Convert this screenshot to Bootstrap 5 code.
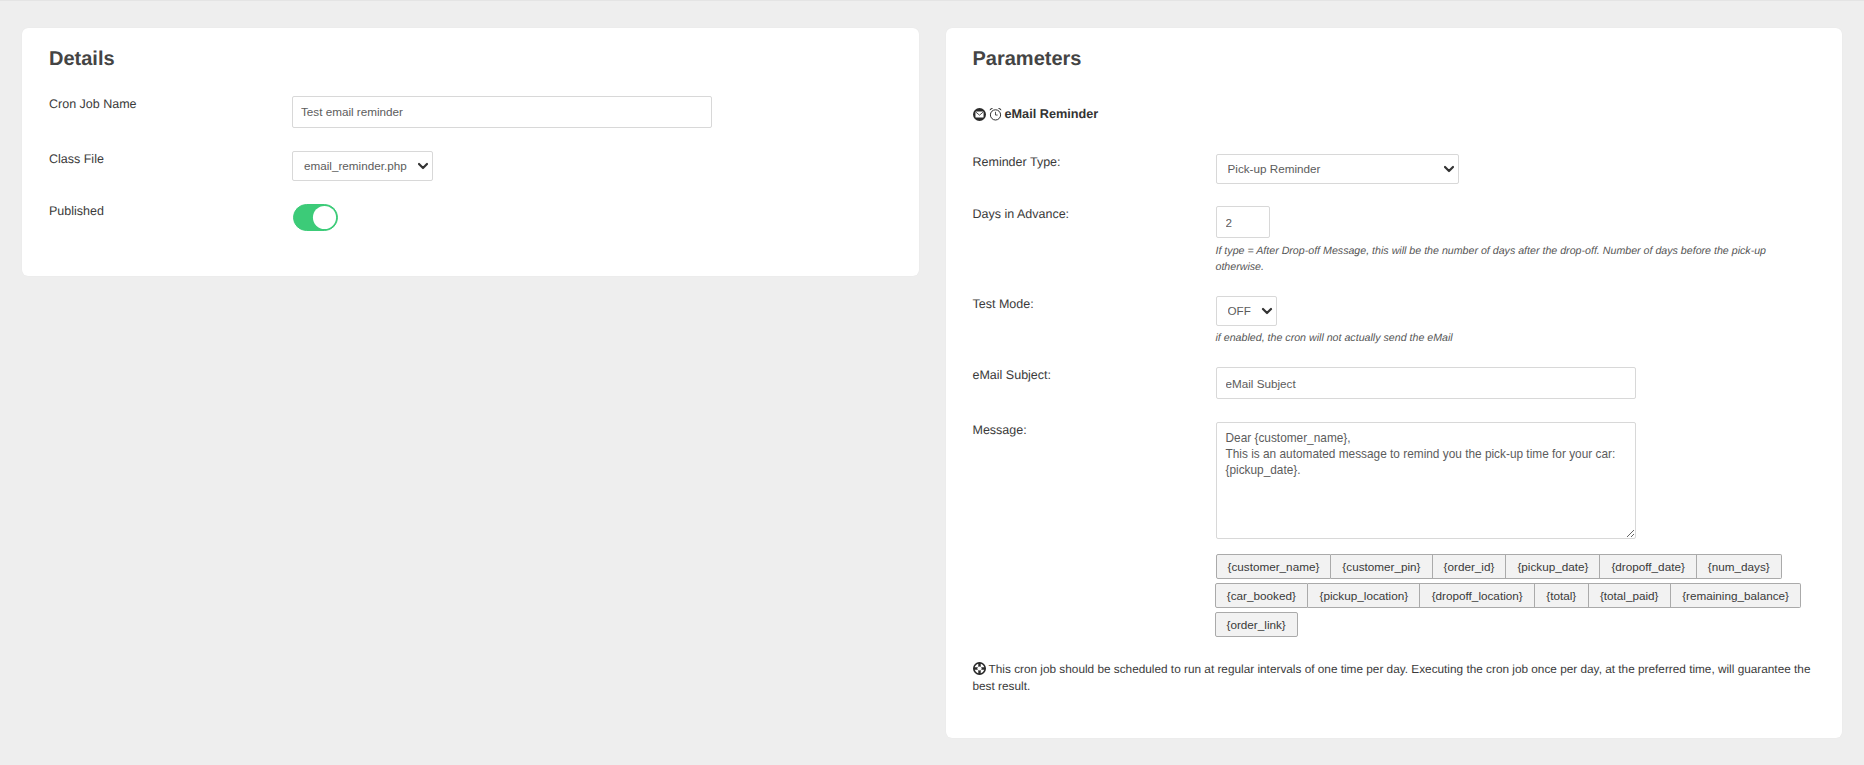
<!DOCTYPE html>
<html lang="en">
<head>
<meta charset="utf-8">
<title>Cron Job</title>
<link rel="stylesheet" href="https://cdn.jsdelivr.net/npm/bootstrap@5.3.0/dist/css/bootstrap.min.css">
<style>
html,body{height:100%}
body{background:#eee;font-family:"Liberation Sans",Arial,sans-serif;font-size:12.5px;line-height:16px;color:#3a3a3a;border-top:1px solid #e4e4e4;text-rendering:geometricPrecision}
.page-wrap{padding:27px 22px 27px}
.panel-row{--bs-gutter-x:27px}
.panel{background:#fff;border-radius:6px;box-shadow:0 0 1px rgba(0,0,0,.08);padding:19px 27px}
.panel-a{height:248px}
.panel-b{height:710px}
.panel-title{font-size:20px;font-weight:700;line-height:24px;color:#444;margin:0}
.field-row{display:flex}
.field-label{width:243px;flex:none;margin:0}
.label-up{margin-top:-1px}
.field-input.form-control,.field-select.form-select,.field-area.form-control{display:block;border:1px solid #d8d8d8;border-radius:2px;background-color:#fff;color:#5c5c5c;font-size:11.7px;line-height:16px;box-shadow:none;min-height:0}
.field-input.form-control{height:32px;padding:6px 8px 8px}
.field-input.input-low.form-control{padding:7px 9px}
.field-select.form-select{height:30px;padding:0 20px 0 11px;background-position:right 3px center;background-size:12px 10px;background-image:url("data:image/svg+xml,%3csvg xmlns='http://www.w3.org/2000/svg' viewBox='0 0 12 10'%3e%3cpath fill='none' stroke='%23333' stroke-width='2.2' stroke-linecap='round' stroke-linejoin='round' d='M2 3l4 4 4-4'/%3e%3c/svg%3e")}
.w-name.form-control{width:420px}
.w-class.form-select{width:141px}
.w-type.form-select{width:243px}
.w-days.form-control{width:54px}
.w-off.form-select{width:61px}
.w-subject.form-control{width:420px}
.field-area.form-control{width:420px;height:117px;padding:7px 9px;resize:vertical;font-size:11.85px}
.form-switch .green-switch.form-check-input{width:45px;height:27px;margin:0;border:1px solid #3ccb78;background-color:#3ccb78;box-shadow:none;float:none;background-image:url("data:image/svg+xml,%3csvg xmlns='http://www.w3.org/2000/svg' viewBox='-4 -4 8 8'%3e%3ccircle r='3.7' fill='%23fff'/%3e%3c/svg%3e")}
.form-switch.switch-box{padding:0;margin:0 0 0 1px;min-height:0}
.hint{font-size:10.65px;font-style:italic;color:#555;line-height:16px;margin:0}
.tag-wrap{display:flex;flex-wrap:wrap;row-gap:4px;margin-left:-1px;width:590px}
.tag-btn{font-size:11.72px;line-height:16px;color:#3a3a3a;background:#f2f2f2;border:1px solid #aaa;border-left-width:0;padding:4px 11px;height:25px;border-radius:0;white-space:nowrap}
.tag-btn.tag-wide{padding:4px 11.3px}
.tag-btn.tag-start{border-left-width:1px;border-radius:2px 0 0 2px}
.tag-btn.tag-end{border-radius:0 2px 2px 0}
.tag-btn.tag-solo{border-left-width:1px;border-radius:2px}
.tag-first{margin-left:1px}
.block-title{font-size:12.7px;font-weight:700;display:flex;align-items:center;gap:3px;color:#333;margin-top:35px}
.ico{display:block;flex:none}
.note-ico{display:inline-block;vertical-align:-2px}
.gap-name{margin-top:25px}
.gap-next{margin-top:23px}
.gap-a{margin-top:32px}
.gap-days{margin-top:22px}
.gap-b{margin-top:21px}
.gap-c{margin-top:23px}
.hint-w{width:590px;margin-top:5px}
.hint-t{margin-top:4px}
.tag-top{margin-top:15px}
.note{margin:24px 0 0;font-size:11.8px;line-height:16.5px}
</style>
</head>
<body>
<div class="page-wrap">
<div class="row panel-row">
  <div class="col-6">
    <div class="panel panel-a">
      <h2 class="panel-title">Details</h2>
      <div class="field-row gap-name">
        <label class="field-label">Cron Job Name</label>
        <input class="field-input w-name form-control" value="Test email reminder">
      </div>
      <div class="field-row gap-next">
        <label class="field-label">Class File</label>
        <select class="field-select w-class form-select"><option>email_reminder.php</option></select>
      </div>
      <div class="field-row gap-next">
        <label class="field-label label-up">Published</label>
        <div class="form-check form-switch switch-box"><input class="form-check-input green-switch" type="checkbox" role="switch" checked></div>
      </div>
    </div>
  </div>
  <div class="col-6">
    <div class="panel panel-b">
      <h2 class="panel-title">Parameters</h2>
      <div class="block-title">
        <svg class="ico" width="13" height="13" viewBox="0 0 16 16"><circle cx="8" cy="8" r="8" fill="#2b2b2b"/><rect x="3" y="4.2" width="10" height="7.6" rx=".8" fill="#fff"/><path d="M3.2 4.8 8 8.8 12.8 4.8" fill="none" stroke="#2b2b2b" stroke-width="1"/></svg>
        <svg class="ico" width="13" height="14" viewBox="0 0 16 17"><circle cx="8" cy="9.6" r="6.3" fill="none" stroke="#2b2b2b" stroke-width="1.2"/><path d="M8 5.8V9.8L10.6 9.8" fill="none" stroke="#2b2b2b" stroke-width="1"/><path d="M.8 4.2A3 3 0 0 1 5 1.4ZM15.2 4.2A3 3 0 0 0 11 1.4Z" fill="#2b2b2b"/></svg>
        <span>eMail Reminder</span>
      </div>
      <div class="field-row gap-a">
        <label class="field-label">Reminder Type:</label>
        <select class="field-select w-type form-select"><option>Pick-up Reminder</option></select>
      </div>
      <div class="field-row gap-days">
        <label class="field-label">Days in Advance:</label>
        <div>
          <input class="field-input input-low w-days form-control" value="2">
          <p class="hint hint-w">If type = After Drop-off Message, this will be the number of days after the drop-off. Number of days before the pick-up otherwise.</p>
        </div>
      </div>
      <div class="field-row gap-b">
        <label class="field-label">Test Mode:</label>
        <div>
          <select class="field-select w-off form-select"><option>OFF</option></select>
          <p class="hint hint-t">if enabled, the cron will not actually send the eMail</p>
        </div>
      </div>
      <div class="field-row gap-b">
        <label class="field-label">eMail Subject:</label>
        <input class="field-input input-low w-subject form-control" value="eMail Subject">
      </div>
      <div class="field-row gap-c">
        <label class="field-label">Message:</label>
        <div>
          <textarea class="field-area form-control">Dear {customer_name},
This is an automated message to remind you the pick-up time for your car:
{pickup_date}.</textarea>
          <div class="tag-wrap tag-top">
            <button class="tag-btn tag-start tag-first">{customer_name}</button><button class="tag-btn">{customer_pin}</button><button class="tag-btn">{order_id}</button><button class="tag-btn">{pickup_date}</button><button class="tag-btn">{dropoff_date}</button><button class="tag-btn tag-end">{num_days}</button>
            <button class="tag-btn tag-wide tag-start">{car_booked}</button><button class="tag-btn tag-wide">{pickup_location}</button><button class="tag-btn tag-wide">{dropoff_location}</button><button class="tag-btn tag-wide">{total}</button><button class="tag-btn tag-wide">{total_paid}</button><button class="tag-btn tag-wide tag-end">{remaining_balance}</button>
            <button class="tag-btn tag-solo">{order_link}</button>
          </div>
        </div>
      </div>
      <p class="note">
        <svg class="note-ico" width="13" height="13" viewBox="0 0 16 16"><circle cx="8" cy="8" r="7" fill="#fff" stroke="#2b2b2b" stroke-width="2"/><path d="M8 1V15M1 8H15" stroke="#2b2b2b" stroke-width="3"/><circle cx="8" cy="8" r="2.6" fill="#fff"/></svg> This cron job should be scheduled to run at regular intervals of one time per day. Executing the cron job once per day, at the preferred time, will guarantee the best result.
      </p>
    </div>
  </div>
</div>
</div>
</body>
</html>
